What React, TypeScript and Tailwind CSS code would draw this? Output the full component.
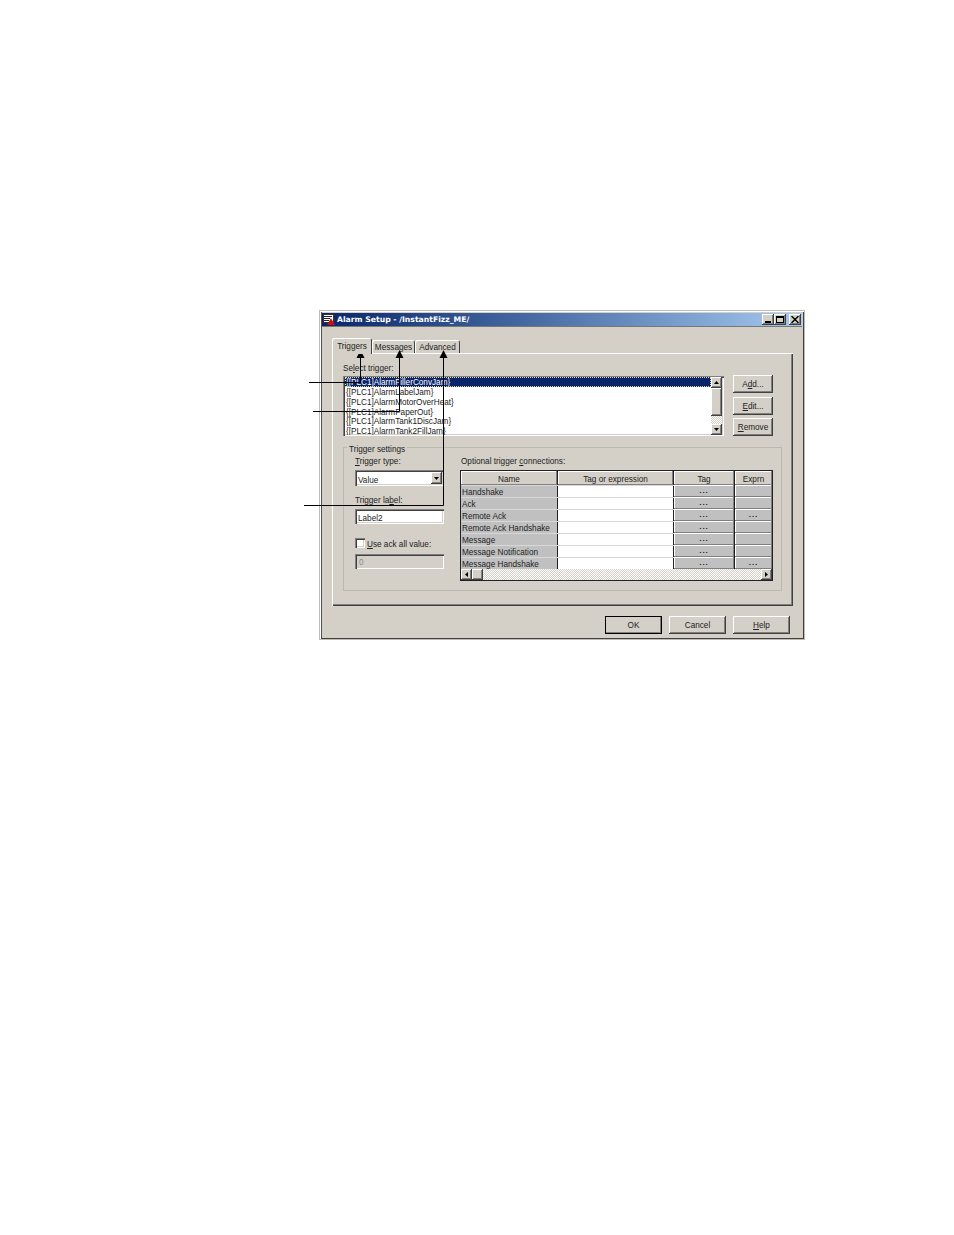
const raised = 'shadow-[inset_-1px_-1px_0_#404040,inset_1px_1px_0_#ffffff,inset_-2px_-2px_0_#808080]'
const sunken = 'shadow-[inset_1px_1px_0_#808080,inset_2px_2px_0_#404040,inset_-1px_-1px_0_#ffffff,inset_-2px_-2px_0_#d4d0c8]'
const checker = 'bg-[repeating-conic-gradient(#d4d0c8_0_25%,#ffffff_0_50%)] bg-[length:2px_2px]'

const triggers = [
  '{[PLC1]AlarmFillerConvJam}',
  '{[PLC1]AlarmLabelJam}',
  '{[PLC1]AlarmMotorOverHeat}',
  '{[PLC1]AlarmPaperOut}',
  '{[PLC1]AlarmTank1DiscJam}',
  '{[PLC1]AlarmTank2FillJam}',
]

const connections = [
  { name: 'Handshake', expr: false },
  { name: 'Ack', expr: false },
  { name: 'Remote Ack', expr: true },
  { name: 'Remote Ack Handshake', expr: false },
  { name: 'Message', expr: false },
  { name: 'Message Notification', expr: false },
  { name: 'Message Handshake', expr: true },
]

function Under({ children }: { children: string }) {
  return <span className="underline">{children}</span>
}

function CaptionButton({ children }: { children: React.ReactNode }) {
  return (
    <div className={`flex h-[11px] w-[12px] items-center justify-center bg-[#d4d0c8] ${raised}`}>
      {children}
    </div>
  )
}

function Arrow({ up }: { up: boolean }) {
  return (
    <svg width="5" height="3" viewBox="0 0 5 3">
      <path d={up ? 'M2.5 0 L5 3 L0 3 Z' : 'M0 0 L5 0 L2.5 3 Z'} fill="#000" />
    </svg>
  )
}

function SideArrow({ left }: { left: boolean }) {
  return (
    <svg width="3" height="5" viewBox="0 0 3 5">
      <path d={left ? 'M0 2.5 L3 0 L3 5 Z' : 'M3 2.5 L0 0 L0 5 Z'} fill="#000" />
    </svg>
  )
}

function ScrollButton({ children, className = '' }: { children?: React.ReactNode; className?: string }) {
  return (
    <div className={`flex shrink-0 items-center justify-center bg-[#d4d0c8] ${raised} ${className}`}>
      {children}
    </div>
  )
}

function SideButton({ children }: { children: React.ReactNode }) {
  return (
    <button className={`flex h-[18px] w-[40px] items-center justify-center bg-[#d4d0c8] pt-[3px] text-[#222] ${raised}`}>
      {children}
    </button>
  )
}

function DialogButton({ children, isDefault = false }: { children: React.ReactNode; isDefault?: boolean }) {
  return (
    <button className={`flex h-[18px] w-[57px] items-center justify-center bg-[#d4d0c8] pt-[2px] text-[#222] ${raised} ${isDefault ? 'outline outline-1 -outline-offset-1 outline-black' : ''}`}>
      {children}
    </button>
  )
}

function GridHeader({ children, className = '' }: { children: string; className?: string }) {
  return (
    <div className={`flex h-[14px] items-center justify-center bg-[#d4d0c8] pt-[4px] text-[#222] shadow-[inset_-1px_-1px_0_#808080,inset_1px_1px_0_#ffffff] ${className}`}>
      {children}
    </div>
  )
}

function GridCellButton({ on, className = '' }: { on: boolean; className?: string }) {
  return (
    <div className={`flex h-[12px] items-center justify-center bg-[#c0c0c0] pb-[1px] text-[8px] font-bold leading-none tracking-[1px] text-[#222] shadow-[inset_-1px_-1px_0_#808080,inset_1px_1px_0_#ffffff] ${className}`}>
      {on ? '...' : ''}
    </div>
  )
}

export default function App() {
  return (
    <div className="relative min-h-[1235px] overflow-hidden bg-white pt-[310px] pl-[319px] font-['Liberation_Sans',sans-serif] text-[8.2px] leading-none text-[#222]">
      {/* dialog window */}
      <div className="flex h-[330px] w-[486px] flex-col border border-[#c0bcb4] bg-[#d4d0c8] p-[2px] shadow-[inset_1px_1px_0_#ffffff,inset_-1px_-1px_0_#404040,inset_2px_0_0_#505050]">
        <div className="flex h-[14px] shrink-0 items-center justify-between border-b border-[#777] bg-gradient-to-r from-[#0a246a] to-[#a6caf0] pr-[1px] pl-[1px]">
          <div className="flex items-center gap-[2px]">
            <svg width="12" height="11" viewBox="0 0 12 11">
              <rect x="0.5" y="0.5" width="10" height="8" fill="#fff" stroke="#333" strokeWidth="1" />
              <path d="M1 2.5h8M1 4.5h6M1 6.5h5" stroke="#223" strokeWidth="1" />
              <path d="M8 4 L12 11 L4 11 Z" fill="#c81010" />
            </svg>
            <span className="font-['DejaVu_Sans',sans-serif] text-[7.7px] font-bold text-white">
              Alarm Setup - /InstantFizz_ME/
            </span>
          </div>
          <div className="flex">
            <CaptionButton>
              <div className="mt-[5px] h-[2px] w-[6px] bg-black" />
            </CaptionButton>
            <CaptionButton>
              <div className="h-[7px] w-[8px] border border-t-2 border-black" />
            </CaptionButton>
            <div className="ml-[3px]">
              <CaptionButton>
                <svg width="8" height="7" viewBox="0 0 8 7">
                  <path d="M0.5 0 L7.5 7 M7.5 0 L0.5 7" stroke="#000" strokeWidth="1.4" />
                </svg>
              </CaptionButton>
            </div>
          </div>
        </div>

        {/* tabs */}
        <div className="mt-[11px] ml-[10px] flex h-[15px] shrink-0 items-end">
          <div className="relative z-10 -mb-[1px] flex h-[16px] w-[40px] items-center justify-center rounded-t-[2px] bg-[#d4d0c8] pt-[2px] shadow-[inset_1px_1px_0_#ffffff,inset_-1px_0_0_#404040]">
            Triggers
          </div>
          <div className="flex h-[13px] w-[43px] items-center justify-center rounded-t-[2px] pt-[4px] shadow-[inset_1px_1px_0_#ffffff,inset_-1px_0_0_#404040]">
            Messages
          </div>
          <div className="flex h-[13px] w-[45px] items-center justify-center rounded-t-[2px] pt-[4px] shadow-[inset_1px_1px_0_#ffffff,inset_-1px_0_0_#404040]">
            Advanced
          </div>
        </div>

        {/* tab panel */}
        <div className="ml-[10px] flex h-[253px] w-[461px] shrink-0 flex-col px-[11px] shadow-[inset_1px_1px_0_#ffffff,inset_-1px_-1px_0_#404040,inset_-2px_-2px_0_#808080]">
          <div className="mt-[12px] h-[10px]">Se<Under>l</Under>ect trigger:</div>
          <div className="mt-[1px] flex">
            <div className={`relative flex h-[60px] w-[381px] bg-white p-[1px] ${sunken}`}>
              <div className="flex-1 overflow-hidden pl-[1px]">
                {triggers.map((t, i) => (
                  <div
                    key={t}
                    className={`flex h-[9.8px] items-center pt-[3px] pl-[1px] whitespace-nowrap ${i === 0 ? 'bg-[#0a246a] text-white outline-1 -outline-offset-1 outline-dotted outline-[#e8d890]' : 'text-[#222]'}`}
                  >
                    {t}
                  </div>
                ))}
              </div>
              <div className={`mr-[1px] flex w-[11px] shrink-0 flex-col ${checker}`}>
                <ScrollButton className="h-[11px]"><Arrow up /></ScrollButton>
                <ScrollButton className="h-[28px]" />
                <div className="flex-1" />
                <ScrollButton className="h-[11px]"><Arrow up={false} /></ScrollButton>
              </div>
            </div>
            <div className="-mt-[1px] ml-[9px] flex flex-col gap-[3.5px]">
              <SideButton><span>A<span className="underline">d</span>d...</span></SideButton>
              <SideButton><span><Under>E</Under>dit...</span></SideButton>
              <SideButton><span><Under>R</Under>emove</span></SideButton>
            </div>
          </div>

          {/* trigger settings */}
          <div className="relative mt-[11px] flex h-[144px] w-[439px] border border-[#bcb8b0] pt-[10px] pl-[11px]">
            <span className="absolute -top-[2px] left-[3px] bg-[#d4d0c8] px-[2px]">Trigger settings</span>
            <div className="flex w-[89px] shrink-0 flex-col">
              <div className="h-[9px]"><Under>T</Under>rigger type:</div>
              <div className={`mt-[3px] flex h-[16px] w-[89px] items-center justify-between bg-white pr-[2px] pl-[3px] ${sunken}`}>
                <span className="pt-[7px]">Value</span>
                <ScrollButton className="h-[12px] w-[11px]"><Arrow up={false} /></ScrollButton>
              </div>
              <div className="mt-[11px] h-[9px]">Trigger la<Under>b</Under>el:</div>
              <div className={`mt-[3px] flex h-[15px] w-[89px] items-center bg-white pt-[5px] pl-[3px] ${sunken}`}>Label2</div>
              <div className="mt-[14px] flex h-[9px] items-center gap-[2px]">
                <div className={`h-[10px] w-[10px] bg-white ${sunken}`} />
                <span className="pt-[5px]"><Under>U</Under>se ack all value:</span>
              </div>
              <div className={`mt-[7px] flex h-[15px] w-[89px] items-center pt-[4px] pl-[4px] text-[#888] ${sunken}`}>0</div>
            </div>

            <div className="ml-[16px] flex w-[313px] flex-col">
              <div className="h-[9px] pl-[1px]">Optional trigger <Under>c</Under>onnections:</div>
              <div className="mt-[3px] h-[111px] w-[313px] border border-[#222] bg-white">
                <div className="flex">
                  <GridHeader className="w-[97px] border-r border-[#222]">Name</GridHeader>
                  <GridHeader className="w-[116px] border-r border-[#222]">Tag or expression</GridHeader>
                  <GridHeader className="w-[61px] border-r border-[#222]">Tag</GridHeader>
                  <GridHeader className="flex-1">Exprn</GridHeader>
                </div>
                {connections.map(c => (
                  <div key={c.name} className="flex h-[12px] border-t border-[#d8d8d8] first:border-[#222]">
                    <div className="flex w-[97px] items-center border-r border-[#222] bg-[#c0c0c0] pt-[4px] pl-[1px] whitespace-nowrap text-[#222]">{c.name}</div>
                    <div className="w-[116px] border-r border-[#222] bg-white" />
                    <GridCellButton on className="-mt-[1px] w-[61px] border-r border-[#222]" />
                    <GridCellButton on={c.expr} className="-mt-[1px] flex-1" />
                  </div>
                ))}
                <div className={`flex h-[11px] ${checker}`}>
                  <ScrollButton className="h-[11px] w-[11px]"><SideArrow left /></ScrollButton>
                  <ScrollButton className="h-[11px] w-[11px]" />
                  <div className="flex-1" />
                  <ScrollButton className="h-[11px] w-[11px]"><SideArrow left={false} /></ScrollButton>
                </div>
              </div>
            </div>
          </div>
        </div>

        {/* dialog buttons */}
        <div className="mt-[10px] flex justify-end gap-[7px] pr-[12px]">
          <DialogButton isDefault>OK</DialogButton>
          <DialogButton>Cancel</DialogButton>
          <DialogButton><span><Under>H</Under>elp</span></DialogButton>
        </div>
      </div>

      {/* callout lines pointing at the tabs and list */}
      <svg className="absolute top-0 left-0" width="954" height="1235" viewBox="0 0 954 1235">
        <path d="M309 382.5 H360.5 V352 M313 411.5 H399.5 V352 M304 505.5 H443.5 V352" fill="none" stroke="#000" strokeWidth="1" />
        <path d="M360.5 350 L364.5 358 L356.5 358 Z M399.5 350 L403.5 358 L395.5 358 Z M443.5 350 L447.5 358 L439.5 358 Z" fill="#000" />
      </svg>
    </div>
  )
}
